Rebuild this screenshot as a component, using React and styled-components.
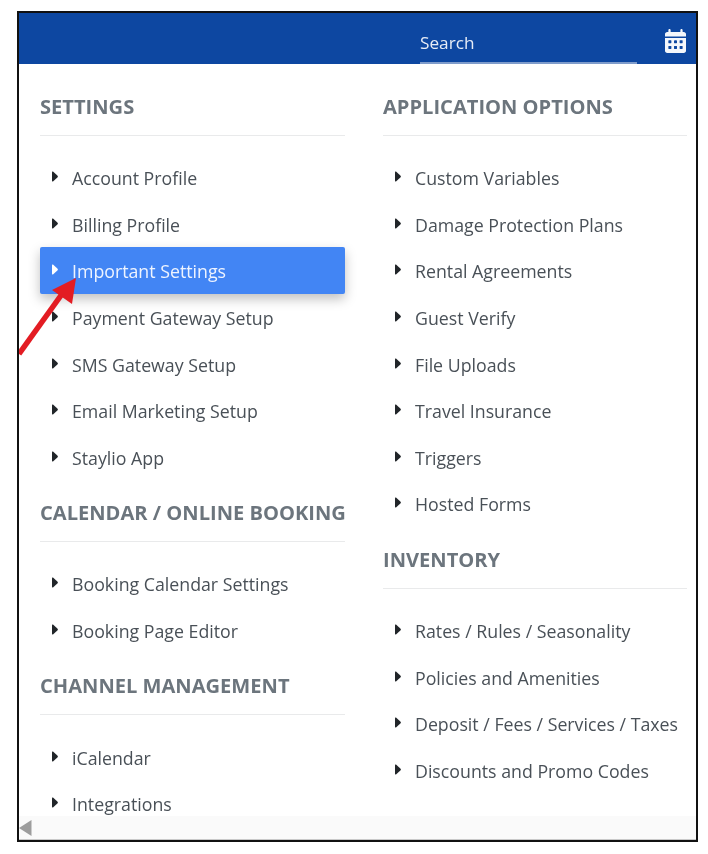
import React from "react";
import styled, { createGlobalStyle } from "styled-components";

const Global = createGlobalStyle`
  html, body { margin: 0; padding: 0; background: #fff; }
  body { font-family: "Open Sans", "Noto Sans", "Liberation Sans", sans-serif; }
`;

const Page = styled.div`
  width: 708px;
  height: 854px;
  padding: 11px 10px 12px 17px;
  box-sizing: border-box;
`;

const Frame = styled.div`
  position: relative;
  width: 681px;
  height: 831px;
  box-sizing: border-box;
  border: 2px solid #111;
  display: flex;
  flex-direction: column;
  background: #fff;
  overflow: hidden;
  filter: blur(0.35px);
`;

const TopBar = styled.header`
  flex: none;
  height: 51px;
  background: #0d47a1;
  display: flex;
  align-items: flex-end;
  padding-left: 401px;
  box-sizing: border-box;
`;

const SearchBox = styled.div`
  width: 217px;
  height: 38px;
  box-sizing: border-box;
  border-bottom: 2px solid #7f9ccb;
  color: #e6ecf6;
  font-size: 17.2px;
  line-height: 32px;
  padding-top: 1px;
`;

const CalendarIcon = styled.svg`
  width: 21px;
  height: 24px;
  margin: 0 0 11px 28px;
  fill: #f4f7fb;
`;

const CalendarDot = styled.rect`
  fill: #0d47a1;
`;

const Content = styled.main`
  flex: 1;
  min-height: 0;
  overflow: hidden;
  display: grid;
  grid-template-columns: 305px 304px;
  column-gap: 38px;
  padding: 11px 0 0 21px;
`;

const Column = styled.div`
  display: flex;
  flex-direction: column;
`;

const Heading = styled.h2`
  margin: 0;
  height: 61px;
  box-sizing: border-box;
  padding-top: 18px;
  border-bottom: 1px solid #e9eaeb;
  font-size: 20.1px;
  line-height: 28px;
  font-weight: 700;
  color: #6c757d;
  white-space: nowrap;
`;

const List = styled.ul`
  list-style: none;
  margin: 0;
  padding: 18px 0 1px;
`;

const Item = styled.li`
  height: 46.6px;
  display: flex;
  align-items: center;
  gap: 14px;
  padding: 2px 0 0 12px;
  box-sizing: border-box;
  font-size: 17.75px;
  color: ${(p) => (p.$active ? "#eef4ff" : "#495057")};
  background: ${(p) => (p.$active ? "#4285f4" : "transparent")};
  border-radius: ${(p) => (p.$active ? "2px" : "0")};
  box-shadow: ${(p) => (p.$active ? "0 5px 12px rgba(0,0,0,.25)" : "none")};
  white-space: nowrap;
`;

const Caret = styled.svg`
  flex: none;
  width: 6px;
  height: 11px;
  margin-top: -3px;
  fill: ${(p) => (p.$active ? "#fff" : "#212529")};
`;

const ScrollBar = styled.div`
  flex: none;
  height: 24px;
  background: #fafafa;
  border-bottom: 1px solid #c9c9c9;
  box-sizing: border-box;
  display: flex;
  align-items: flex-start;
  padding-top: 4px;
`;

const ScrollArrow = styled.svg`
  width: 13px;
  height: 16px;
  fill: #9d9d9d;
`;

const Pointer = styled.svg`
  position: absolute;
  left: 0;
  top: 262px;
  width: 66px;
  height: 96px;
`;

const sections = {
  left: [
    { title: "SETTINGS", items: ["Account Profile", "Billing Profile", "Important Settings", "Payment Gateway Setup", "SMS Gateway Setup", "Email Marketing Setup", "Staylio App"] },
    { title: "CALENDAR / ONLINE BOOKING", items: ["Booking Calendar Settings", "Booking Page Editor"] },
    { title: "CHANNEL MANAGEMENT", items: ["iCalendar", "Integrations"] },
  ],
  right: [
    { title: "APPLICATION OPTIONS", items: ["Custom Variables", "Damage Protection Plans", "Rental Agreements", "Guest Verify", "File Uploads", "Travel Insurance", "Triggers", "Hosted Forms"] },
    { title: "INVENTORY", items: ["Rates / Rules / Seasonality", "Policies and Amenities", "Deposit / Fees / Services / Taxes", "Discounts and Promo Codes"] },
  ],
};

function Section({ title, items }) {
  return (
    <section>
      <Heading>{title}</Heading>
      <List>
        {items.map((label) => {
          const active = label === "Important Settings";
          return (
            <Item key={label} $active={active}>
              <Caret $active={active} viewBox="0 0 6 11"><path d="M0 1.2 Q0 0 1 0.6 L5.6 4.7 Q6.2 5.5 5.6 6.3 L1 10.4 Q0 11 0 9.8 Z" /></Caret>
              {label}
            </Item>
          );
        })}
      </List>
    </section>
  );
}

const dotColumns = [72, 192, 312];
const dotRows = [240, 360];

export default function App() {
  return (
    <Page>
      <Global />
      <Frame>
        <TopBar>
          <SearchBox>Search</SearchBox>
          <CalendarIcon viewBox="0 0 448 512">
            <path d="M96 0c13 0 24 11 24 24v40h208V24c0-13 11-24 24-24s24 11 24 24v40h24c27 0 48 21 48 48v48H0v-48c0-27 21-48 48-48h24V24C72 11 83 0 96 0zM0 192h448v272c0 27-21 48-48 48H48c-27 0-48-21-48-48V192z" />
            {dotRows.map((y) => dotColumns.map((x) => <CalendarDot key={`${x}-${y}`} x={x} y={y} width="64" height="64" rx="10" />))}
          </CalendarIcon>
        </TopBar>
        <Content>
          <Column>{sections.left.map((s) => <Section key={s.title} {...s} />)}</Column>
          <Column>{sections.right.map((s) => <Section key={s.title} {...s} />)}</Column>
        </Content>
        <ScrollBar>
          <ScrollArrow viewBox="0 0 13 16"><path d="M0 8 L12.5 0 V16 Z" /></ScrollArrow>
        </ScrollBar>
        <Pointer viewBox="0 0 66 96">
          <path d="M0 79 L43 19" stroke="#e31c23" strokeWidth="5.5" fill="none" />
          <path d="M57 3 L33 15 L53 29 Z" fill="#e31c23" />
        </Pointer>
      </Frame>
    </Page>
  );
}
